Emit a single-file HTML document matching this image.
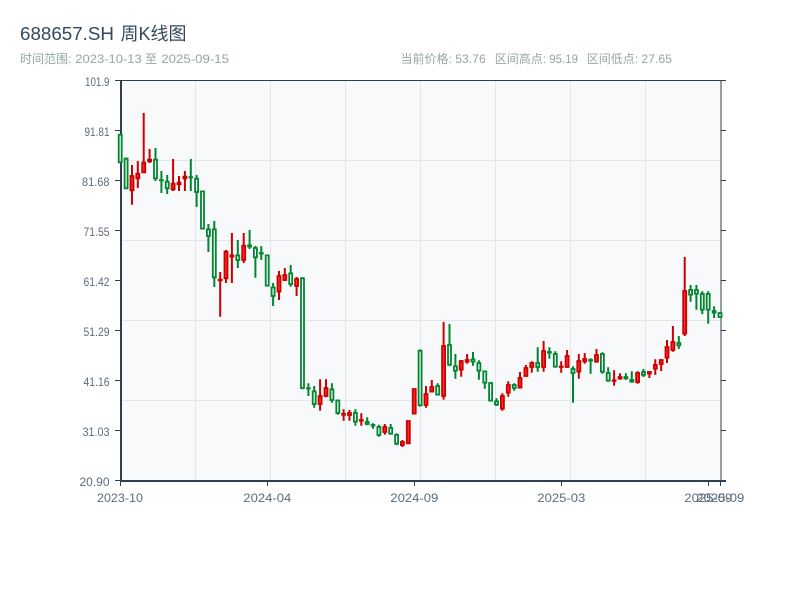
<!DOCTYPE html>
<html><head><meta charset="utf-8"><style>
html,body{margin:0;padding:0;background:#fff;width:800px;height:600px;overflow:hidden}
svg{display:block}
text{font-family:"Liberation Sans","Noto Sans CJK SC",sans-serif}
.s{font-size:12px;fill:#95a5a6}
.a{font-size:11.5px;fill:#5c6b7a}
</style></head><body>
<svg width="800" height="600" viewBox="0 0 800 600" xmlns="http://www.w3.org/2000/svg">
<rect width="800" height="600" fill="#fff"/>
<text x="20" y="40" font-size="18" fill="#34495e" textLength="94" lengthAdjust="spacingAndGlyphs">688657.SH</text>
<text x="120.5" y="40" font-size="18" fill="#34495e">周K线图</text>
<text class="s" x="20" y="63">时间范围:</text>
<text class="s" x="75.3" y="63" textLength="66.4" lengthAdjust="spacingAndGlyphs">2023-10-13</text>
<text class="s" x="145" y="63">至</text>
<text class="s" x="161.3" y="63" textLength="67.7" lengthAdjust="spacingAndGlyphs">2025-09-15</text>
<text class="s" x="400.5" y="63">当前价格:</text>
<text class="s" x="455.3" y="63" textLength="30.4" lengthAdjust="spacingAndGlyphs">53.76</text>
<text class="s" x="494.7" y="63">区间高点:</text>
<text class="s" x="549.3" y="63" textLength="28.7" lengthAdjust="spacingAndGlyphs">95.19</text>
<text class="s" x="586.7" y="63">区间低点:</text>
<text class="s" x="641.3" y="63" textLength="30.7" lengthAdjust="spacingAndGlyphs">27.65</text>

<rect x="121" y="81" width="600" height="399" fill="#f8f9fa"/>
<path d="M195.5 81V480M270.5 81V480M345.5 81V480M420.5 81V480M495.5 81V480M570.5 81V480M645.5 81V480M121 160.5H720M121 240.5H720M121 320.5H720M121 400.5H720" stroke="#e2e6ea" stroke-width="1" fill="none"/>

<path d="M120 80.5H726M721 80.5V480M115 80.5H120M115 130.5H120M115 180.5H120M115 230.5H120M115 280.5H120M115 330.5H120M115 380.5H120M115 430.5H120M721 130.5H726M721 180.5H726M721 230.5H726M721 280.5H726M721 330.5H726M721 380.5H726M721 430.5H726M115 480.5H120M120.5 481V486M267.5 481V486M414.5 481V486M561.5 481V486M708.5 481V486M720.5 481V486" stroke="#2c3e50" stroke-width="1" fill="none"/>
<rect x="120" y="80" width="2" height="402" fill="#2c3e50"/>
<rect x="120" y="480" width="606" height="2" fill="#2c3e50"/>

<g class="a" text-anchor="end">
<text class="a" x="109.5" y="86" textLength="24.5" lengthAdjust="spacingAndGlyphs">101.9</text>
<text class="a" x="109.5" y="136" textLength="25" lengthAdjust="spacingAndGlyphs">91.81</text>
<text class="a" x="109.5" y="186" textLength="27.5" lengthAdjust="spacingAndGlyphs">81.68</text>
<text class="a" x="109.5" y="236" textLength="26" lengthAdjust="spacingAndGlyphs">71.55</text>
<text class="a" x="109.5" y="286" textLength="26" lengthAdjust="spacingAndGlyphs">61.42</text>
<text class="a" x="109.5" y="336" textLength="26" lengthAdjust="spacingAndGlyphs">51.29</text>
<text class="a" x="109.5" y="386" textLength="26" lengthAdjust="spacingAndGlyphs">41.16</text>
<text class="a" x="109.5" y="436" textLength="27" lengthAdjust="spacingAndGlyphs">31.03</text>
<text class="a" x="109.5" y="486" textLength="30" lengthAdjust="spacingAndGlyphs">20.90</text>
</g>
<text class="a" x="97" y="502" textLength="46" lengthAdjust="spacingAndGlyphs">2023-10</text>
<text class="a" x="243.3" y="502" textLength="48" lengthAdjust="spacingAndGlyphs">2024-04</text>
<text class="a" x="390.3" y="502" textLength="48" lengthAdjust="spacingAndGlyphs">2024-09</text>
<text class="a" x="537.3" y="502" textLength="48" lengthAdjust="spacingAndGlyphs">2025-03</text>
<text class="a" x="684.3" y="502" textLength="48" lengthAdjust="spacingAndGlyphs">2025-09</text>
<text class="a" x="696.3" y="502" textLength="48" lengthAdjust="spacingAndGlyphs">2025-09</text>

<path fill="none" stroke="#cc0000" stroke-width="2" d="M132 165V204.7M137.8 161V188M143.7 113V173M149.6 149V163M173.1 159V191M179 176V191M184.9 171V191M220.2 272V316.7M226 250V283M231.9 233V283M243.7 233V263M279 271V300M284.8 268V281M296.6 277V296M320.1 379.3V410.7M326 379.3V397.3M343.6 409.3V420.7M349.5 410V420.7M361.3 413.3V425.7M384.8 424V434.7M402.4 440V447M426 386V407.7M431.8 380V392.3M443.6 322V399.7M461.2 360V376.7M467.1 354V363.7M502.4 393.3V410.7M508.3 381.3V396.7M520 372V388.3M525.9 365V376.7M531.8 361.3V372.7M543.6 341V371.7M561.2 361.3V372.7M567.1 350V367.7M578.8 354V378.7M584.7 353V363.7M596.5 349V362.7M614.1 370.3V385.7M620 373.3V379.7M637.6 371.3V383.7M649.4 371.3V378M655.3 359.3V375M661.2 359.3V371M667 340V363M672.9 326V351.7M684.7 257V336"/>

<path fill="none" stroke="#008631" stroke-width="2" d="M126.1 157.5V189M155.5 148V181M161.4 171V193M167.2 175V194M190.8 159V191M196.6 175V207M208.4 224V252M214.3 221V287M237.8 240V268M249.6 230V249M255.4 246V277.7M261.3 246V260M273.1 283V306M290.7 265V286.7M302.5 277V389.3M308.4 383.3V396M314.2 386V407.7M331.9 383.3V402.7M337.8 399.7V414.7M355.4 409.3V425.7M367.2 417.3V425.3M373 423.3V428.7M378.9 424.7V436.7M390.7 424V434.7M396.6 433.3V445.3M420.1 349.5V406.5M437.7 383.3V395.3M449.5 324V366.3M455.4 354V378.7M473 352V365.7M478.9 360.3V379.7M484.8 370.7V388.7M496.5 398.3V406M514.2 383.3V390.7M537.7 347.3V371.7M549.4 347.3V358.7M555.3 351.3V367.7M573 366.3V402.7M590.6 358.3V373.7M602.4 352.3V373.7M608.2 367.3V381.7M625.9 373.3V379.7M631.8 371.3V382.7M643.5 369V377M678.8 336V349M690.6 285V301.7M696.4 285V309.7M702.3 291.3V314.3M708.2 291.3V323.7M714.1 306.3V318"/>

<path fill="#ff3030" stroke="#cc0000" stroke-width="1.8" d="M132 176m-1.5 0h3V190.3h-3zM137.8 173.7m-1.5 0h3V178.3h-3zM143.7 162.7m-1.5 0h3V172.3h-3zM149.6 159.7m-1.5 0h3V161.3h-3zM173.1 183.7m-1.5 0h3V189.3h-3zM179 182.7m-1.5 0h3V184.3h-3zM184.9 176.7m-1.5 0h3V178.3h-3zM220.2 279.7m-1.5 0h3V280.3h-3zM226 251.7m-1.5 0h3V278.3h-3zM231.9 255.4m-1.5 0h3V256.6h-3zM243.7 245.7m-1.5 0h3V260h-3zM279 276m-1.5 0h3V291.6h-3zM284.8 275m-1.5 0h3V280h-3zM296.6 279m-1.5 0h3V286h-3zM320.1 396m-1.5 0h3V404h-3zM326 388m-1.5 0h3V396h-3zM343.6 414m-1.5 0h3V414.7h-3zM349.5 413m-1.5 0h3V415h-3zM361.3 420m-1.5 0h3V420.6h-3zM384.8 427m-1.5 0h3V432h-3zM402.4 442m-1.5 0h3V445h-3zM408.3 421m-1.5 0h3V443.3h-3zM414.2 389m-1.5 0h3V413.6h-3zM426 394m-1.5 0h3V405h-3zM431.8 387m-1.5 0h3V391.6h-3zM443.6 346m-1.5 0h3V396h-3zM461.2 361m-1.5 0h3V369.6h-3zM467.1 360m-1.5 0h3V361.6h-3zM502.4 396m-1.5 0h3V408.6h-3zM508.3 385m-1.5 0h3V392.6h-3zM520 378m-1.5 0h3V387.6h-3zM525.9 368m-1.5 0h3V376h-3zM531.8 363m-1.5 0h3V367h-3zM543.6 351m-1.5 0h3V367h-3zM561.2 366.5m-1.5 0h3V367h-3zM567.1 356m-1.5 0h3V367h-3zM578.8 361m-1.5 0h3V371.6h-3zM584.7 359m-1.5 0h3V361.3h-3zM596.5 355m-1.5 0h3V361.6h-3zM614.1 380.4m-1.5 0h3V380.8h-3zM620 377m-1.5 0h3V378.6h-3zM637.6 373m-1.5 0h3V382h-3zM649.4 372m-1.5 0h3V373.6h-3zM655.3 365m-1.5 0h3V368.6h-3zM661.2 360m-1.5 0h3V364h-3zM667 347m-1.5 0h3V357.6h-3zM672.9 342m-1.5 0h3V350h-3zM684.7 291m-1.5 0h3V333.6h-3z"/>

<path fill="#f8f9fa" stroke="#008631" stroke-width="1.8" d="M120.2 134.7m-1.5 0h3V162.3h-3zM126.1 158.7m-1.5 0h3V188.3h-3zM155.5 159.7m-1.5 0h3V178.3h-3zM161.4 180.2m-1.5 0h3V180.3h-3zM167.2 181.7m-1.5 0h3V188.3h-3zM190.8 177.2m-1.5 0h3V177.3h-3zM196.6 178.7m-1.5 0h3V192h-3zM202.5 191.4m-1.5 0h3V228.6h-3zM208.4 229.4m-1.5 0h3V236h-3zM214.3 229.4m-1.5 0h3V277.3h-3zM237.8 255.4m-1.5 0h3V260h-3zM249.6 245.4m-1.5 0h3V246.6h-3zM255.4 248m-1.5 0h3V257.3h-3zM261.3 253m-1.5 0h3V253.6h-3zM267.2 255.4m-1.5 0h3V285.6h-3zM273.1 287.4m-1.5 0h3V296h-3zM290.7 273.4m-1.5 0h3V284h-3zM302.5 278.4m-1.5 0h3V388h-3zM308.4 388.3m-1.5 0h3V388.4h-3zM314.2 391.4m-1.5 0h3V404h-3zM331.9 389.4m-1.5 0h3V400h-3zM337.8 400.4m-1.5 0h3V413h-3zM355.4 413m-1.5 0h3V421.6h-3zM367.2 422m-1.5 0h3V424h-3zM373 425m-1.5 0h3V425.6h-3zM378.9 427m-1.5 0h3V435h-3zM390.7 428m-1.5 0h3V433.6h-3zM396.6 435m-1.5 0h3V443.6h-3zM420.1 350.7m-1.5 0h3V405.3h-3zM437.7 386m-1.5 0h3V394.6h-3zM449.5 345m-1.5 0h3V364.6h-3zM455.4 366.4m-1.5 0h3V370.6h-3zM473 359.4m-1.5 0h3V361.6h-3zM478.9 363m-1.5 0h3V370.6h-3zM484.8 371.4m-1.5 0h3V382.6h-3zM490.6 383m-1.5 0h3V400.6h-3zM496.5 401.4m-1.5 0h3V404.6h-3zM514.2 385m-1.5 0h3V388h-3zM537.7 363m-1.5 0h3V367h-3zM549.4 352m-1.5 0h3V352.6h-3zM555.3 354m-1.5 0h3V366.6h-3zM573 369m-1.5 0h3V373h-3zM590.6 360m-1.5 0h3V360.6h-3zM602.4 354m-1.5 0h3V371.6h-3zM608.2 373m-1.5 0h3V380.6h-3zM625.9 377m-1.5 0h3V378.3h-3zM631.8 380m-1.5 0h3V381.6h-3zM643.5 372m-1.5 0h3V374.8h-3zM678.8 343m-1.5 0h3V345.3h-3zM690.6 290m-1.5 0h3V294.6h-3zM696.4 290m-1.5 0h3V293.6h-3zM702.3 294m-1.5 0h3V309.6h-3zM708.2 294m-1.5 0h3V309.6h-3zM714.1 311m-1.5 0h3V312.6h-3zM720 313m-1.5 0h3V317h-3z"/>
</svg>
</body></html>
